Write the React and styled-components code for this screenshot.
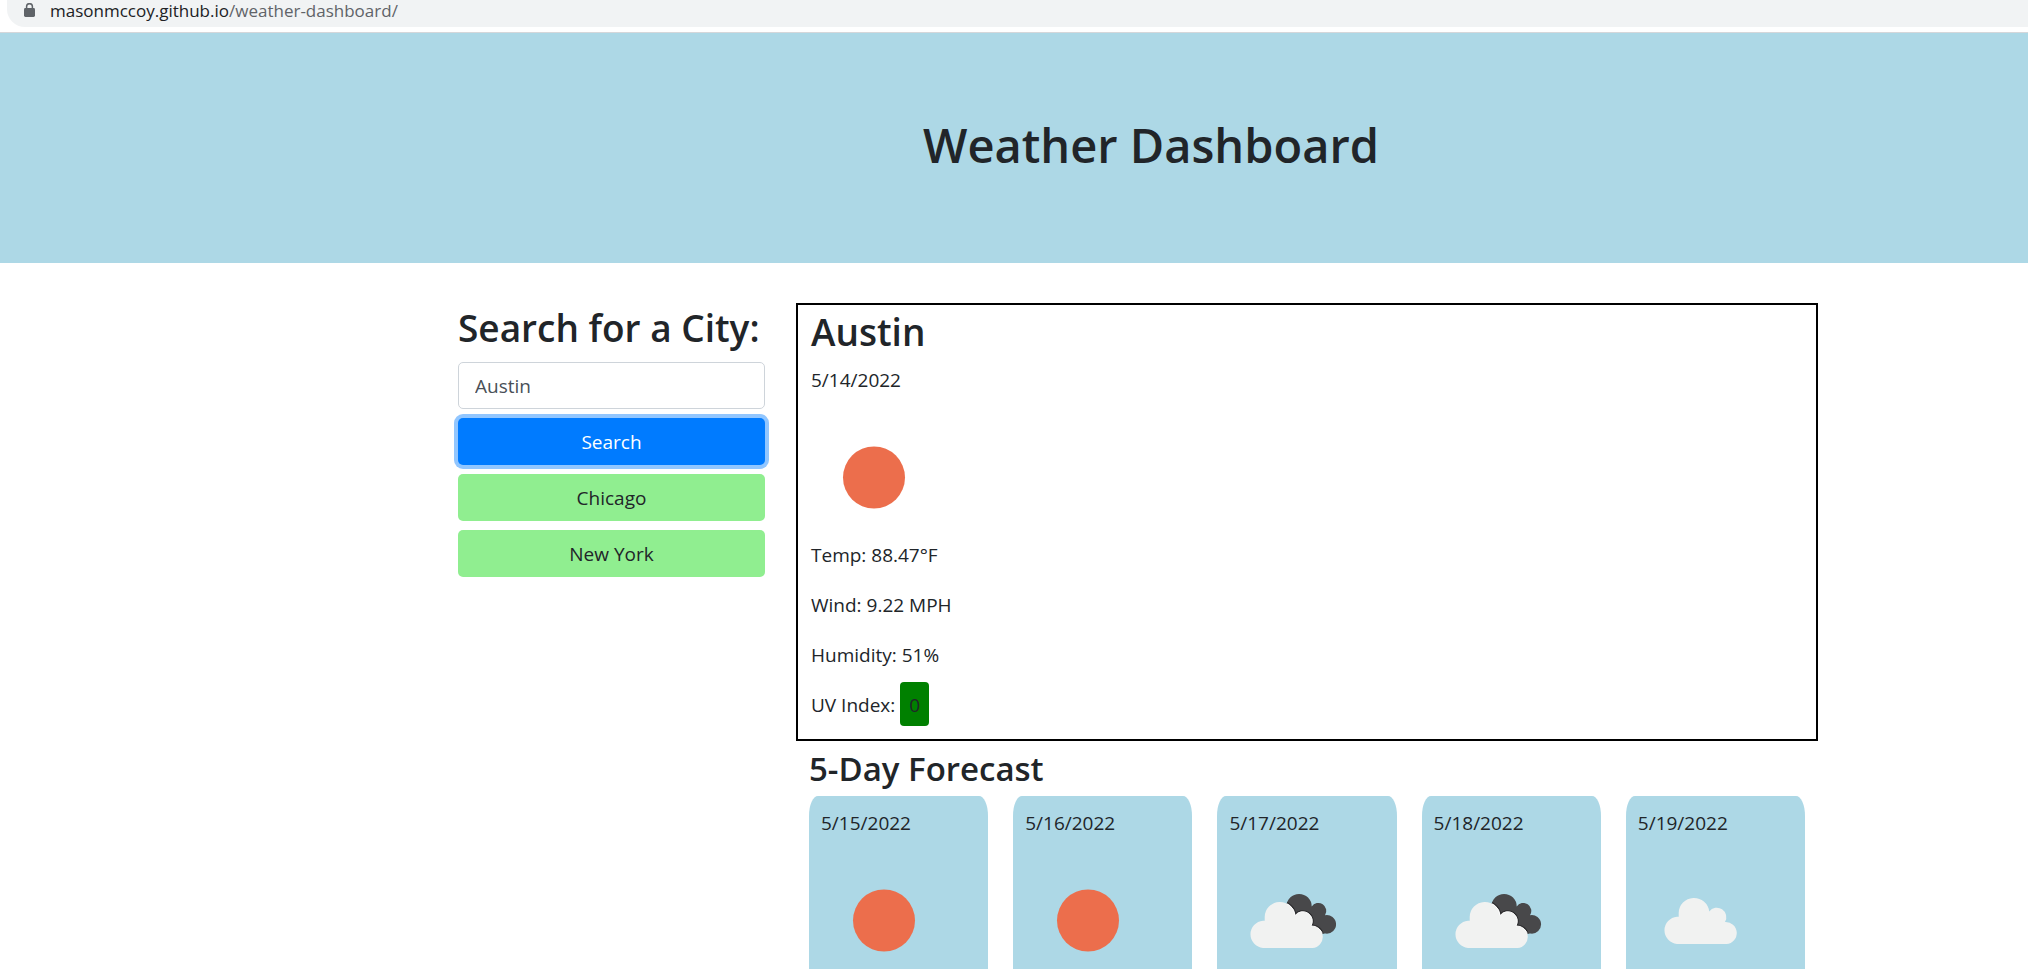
import React, { useId } from 'react';
import styled, { createGlobalStyle } from 'styled-components';

const GlobalStyle = createGlobalStyle`
  *, *::before, *::after { box-sizing: border-box; }
  body {
    margin: 0;
    background: #fff;
    color: #212529;
    font-family: "Segoe UI", "Open Sans", "Noto Sans", sans-serif;
    font-size: 19px;
    line-height: 30px;
  }
  h1, h2, h3, p { margin: 0; }
`;

const Page = styled.div`
  display: flex;
  flex-direction: column;
  height: 100vh;
  overflow: hidden;
`;

const BrowserBar = styled.div`
  flex: none;
  padding: 0 0 5px 7px;
  border-bottom: 1px solid #d5d7da;
`;

const AddressField = styled.div`
  display: flex;
  align-items: center;
  gap: 15px;
  height: 27px;
  padding: 0 0 6px 17px;
  border-bottom-left-radius: 18px;
  background: #f1f3f4;
  color: #5f6368;
  font-size: 17px;
  line-height: 22px;
`;

const Domain = styled.span`
  color: #202124;
`;

const Banner = styled.header`
  flex: none;
  padding: 82px 0 88px 274px;
  background: #add8e6;
  text-align: center;
`;

const Title = styled.h1`
  font-size: 47px;
  font-weight: 600;
  line-height: 60px;
`;

const Main = styled.main`
  flex: 1;
  display: flex;
  gap: 31px;
  min-height: 0;
  padding: 40px 210px 0 458px;
`;

const SearchForm = styled.form`
  flex: none;
  display: flex;
  flex-direction: column;
  gap: 9px;
  width: 307px;
`;

const Heading = styled.label`
  font-size: 37px;
  font-weight: 600;
  line-height: 50px;
  white-space: nowrap;
`;

const CityInput = styled.input`
  width: 100%;
  height: 47px;
  padding: 1px 16px 0;
  border: 1px solid #ced4da;
  border-radius: 5px;
  background: #fff;
  color: #495057;
  font: inherit;
`;

const CityButton = styled.button`
  width: 100%;
  height: 47px;
  padding: 1px 0 0;
  border: 0;
  border-radius: 5px;
  background: ${(p) => (p.$primary ? '#007bff' : '#90ee90')};
  color: ${(p) => (p.$primary ? '#fff' : '#212529')};
  box-shadow: ${(p) => (p.$primary ? '0 0 0 4px #91c6ff' : 'none')};
  font: inherit;
  cursor: pointer;
`;

const Results = styled.div`
  flex: 1;
  min-width: 0;
  display: flex;
  flex-direction: column;
`;

const CurrentWeather = styled.section`
  flex: none;
  display: flex;
  flex-direction: column;
  gap: 20px;
  padding: 3px 13px 19px;
  border: 2px solid #000;
`;

const CityHeader = styled.div`
  display: flex;
  flex-direction: column;
  gap: 9px;
`;

const CityName = styled.h2`
  font-size: 37px;
  font-weight: 600;
  line-height: 48px;
`;

const Reading = styled.p`
  line-height: 30px;
`;

const IconReading = styled.div`
  display: flex;
  flex-direction: column;
`;

const UvBadge = styled.span`
  padding: 10px 9px 8px;
  border-radius: 4px;
  background: #008000;
`;

const Forecast = styled.section`
  flex: 1;
  display: flex;
  flex-direction: column;
  gap: 6px;
  padding: 7px 13px 0;
`;

const ForecastTitle = styled.h3`
  font-size: 33px;
  font-weight: 600;
  line-height: 42px;
`;

const Days = styled.div`
  flex: 1;
  display: grid;
  grid-template-columns: repeat(5, 1fr);
  gap: 25px;
`;

const DayCard = styled.article`
  display: flex;
  flex-direction: column;
  gap: 20px;
  padding: 12px 12px 0;
  border-radius: 9px 9px 0 0 / 20px 20px 0 0;
  background: #add8e6;
`;

const WeatherSvg = styled.svg`
  display: block;
  flex: none;
  width: 125px;
  height: 125px;
`;

const CLOUD =
  'M34 90A13.7 13.7 0 0 1 34 62.7H35.7V59A15.3 15.3 0 0 1 66.2 57.5A9.5 9.5 0 0 1 82 68A11 11 0 0 1 83.5 90Z';
const DARK_CLOUD =
  'M57.5 48.5A12.6 12.6 0 0 1 82.7 48.5A7.4 7.4 0 0 1 96 57.2A9.3 9.3 0 1 1 97 75.6L80 76L60 60Z';

function Sun() {
  return (
    <WeatherSvg viewBox="0 0 125 125" role="img" aria-label="Clear sky">
      <circle cx="63" cy="62.5" r="31" fill="#ec6e4c" />
    </WeatherSvg>
  );
}

function Cloud() {
  return (
    <WeatherSvg viewBox="0 0 125 125" role="img" aria-label="Cloudy">
      <path d={CLOUD} transform="translate(5 -4)" fill="#f1f2f1" />
    </WeatherSvg>
  );
}

function BrokenClouds() {
  const clip = useId();
  return (
    <WeatherSvg viewBox="0 0 125 125" role="img" aria-label="Broken clouds">
      <clipPath id={clip}>
        <path d={DARK_CLOUD} />
      </clipPath>
      <path d={DARK_CLOUD} fill="#48484a" />
      <path d={CLOUD} clipPath={`url(#${clip})`} fill="none" stroke="#2c2c2e" strokeWidth="3" />
      <path d={CLOUD} fill="#f1f2f1" />
      <path d={CLOUD} clipPath={`url(#${clip})`} fill="none" stroke="#fff" strokeWidth="1" />
    </WeatherSvg>
  );
}

function Lock() {
  return (
    <svg width="11" height="15" viewBox="0 0 11 15" aria-hidden="true">
      <path d="M2.6 6V3.6a2.9 2.9 0 0 1 5.8 0V6" fill="none" stroke="#5f6368" strokeWidth="1.5" />
      <rect y="5" width="11" height="9" rx="1.4" fill="#5f6368" />
    </svg>
  );
}

const ICONS = { sun: Sun, cloud: Cloud, broken: BrokenClouds };

const DAYS = [
  { date: '5/15/2022', icon: 'sun' },
  { date: '5/16/2022', icon: 'sun' },
  { date: '5/17/2022', icon: 'broken' },
  { date: '5/18/2022', icon: 'broken' },
  { date: '5/19/2022', icon: 'cloud' },
];

export default function App() {
  return (
    <Page>
      <GlobalStyle />
      <BrowserBar>
        <AddressField>
          <Lock />
          <span>
            <Domain>masonmccoy.github.io</Domain>/weather-dashboard/
          </span>
        </AddressField>
      </BrowserBar>
      <Banner>
        <Title>Weather Dashboard</Title>
      </Banner>
      <Main>
        <SearchForm onSubmit={(e) => e.preventDefault()}>
          <Heading htmlFor="city">Search for a City:</Heading>
          <CityInput id="city" type="text" defaultValue="Austin" />
          <CityButton type="submit" $primary>Search</CityButton>
          <CityButton type="button">Chicago</CityButton>
          <CityButton type="button">New York</CityButton>
        </SearchForm>
        <Results>
          <CurrentWeather>
            <CityHeader>
              <CityName>Austin</CityName>
              <Reading>5/14/2022</Reading>
            </CityHeader>
            <IconReading>
              <Sun />
              <Reading>Temp: 88.47°F</Reading>
            </IconReading>
            <Reading>Wind: 9.22 MPH</Reading>
            <Reading>Humidity: 51%</Reading>
            <Reading>
              UV Index: <UvBadge>0</UvBadge>
            </Reading>
          </CurrentWeather>
          <Forecast>
            <ForecastTitle>5-Day Forecast</ForecastTitle>
            <Days>
              {DAYS.map((day) => {
                const Icon = ICONS[day.icon];
                return (
                  <DayCard key={day.date}>
                    <Reading>{day.date}</Reading>
                    <Icon />
                  </DayCard>
                );
              })}
            </Days>
          </Forecast>
        </Results>
      </Main>
    </Page>
  );
}
